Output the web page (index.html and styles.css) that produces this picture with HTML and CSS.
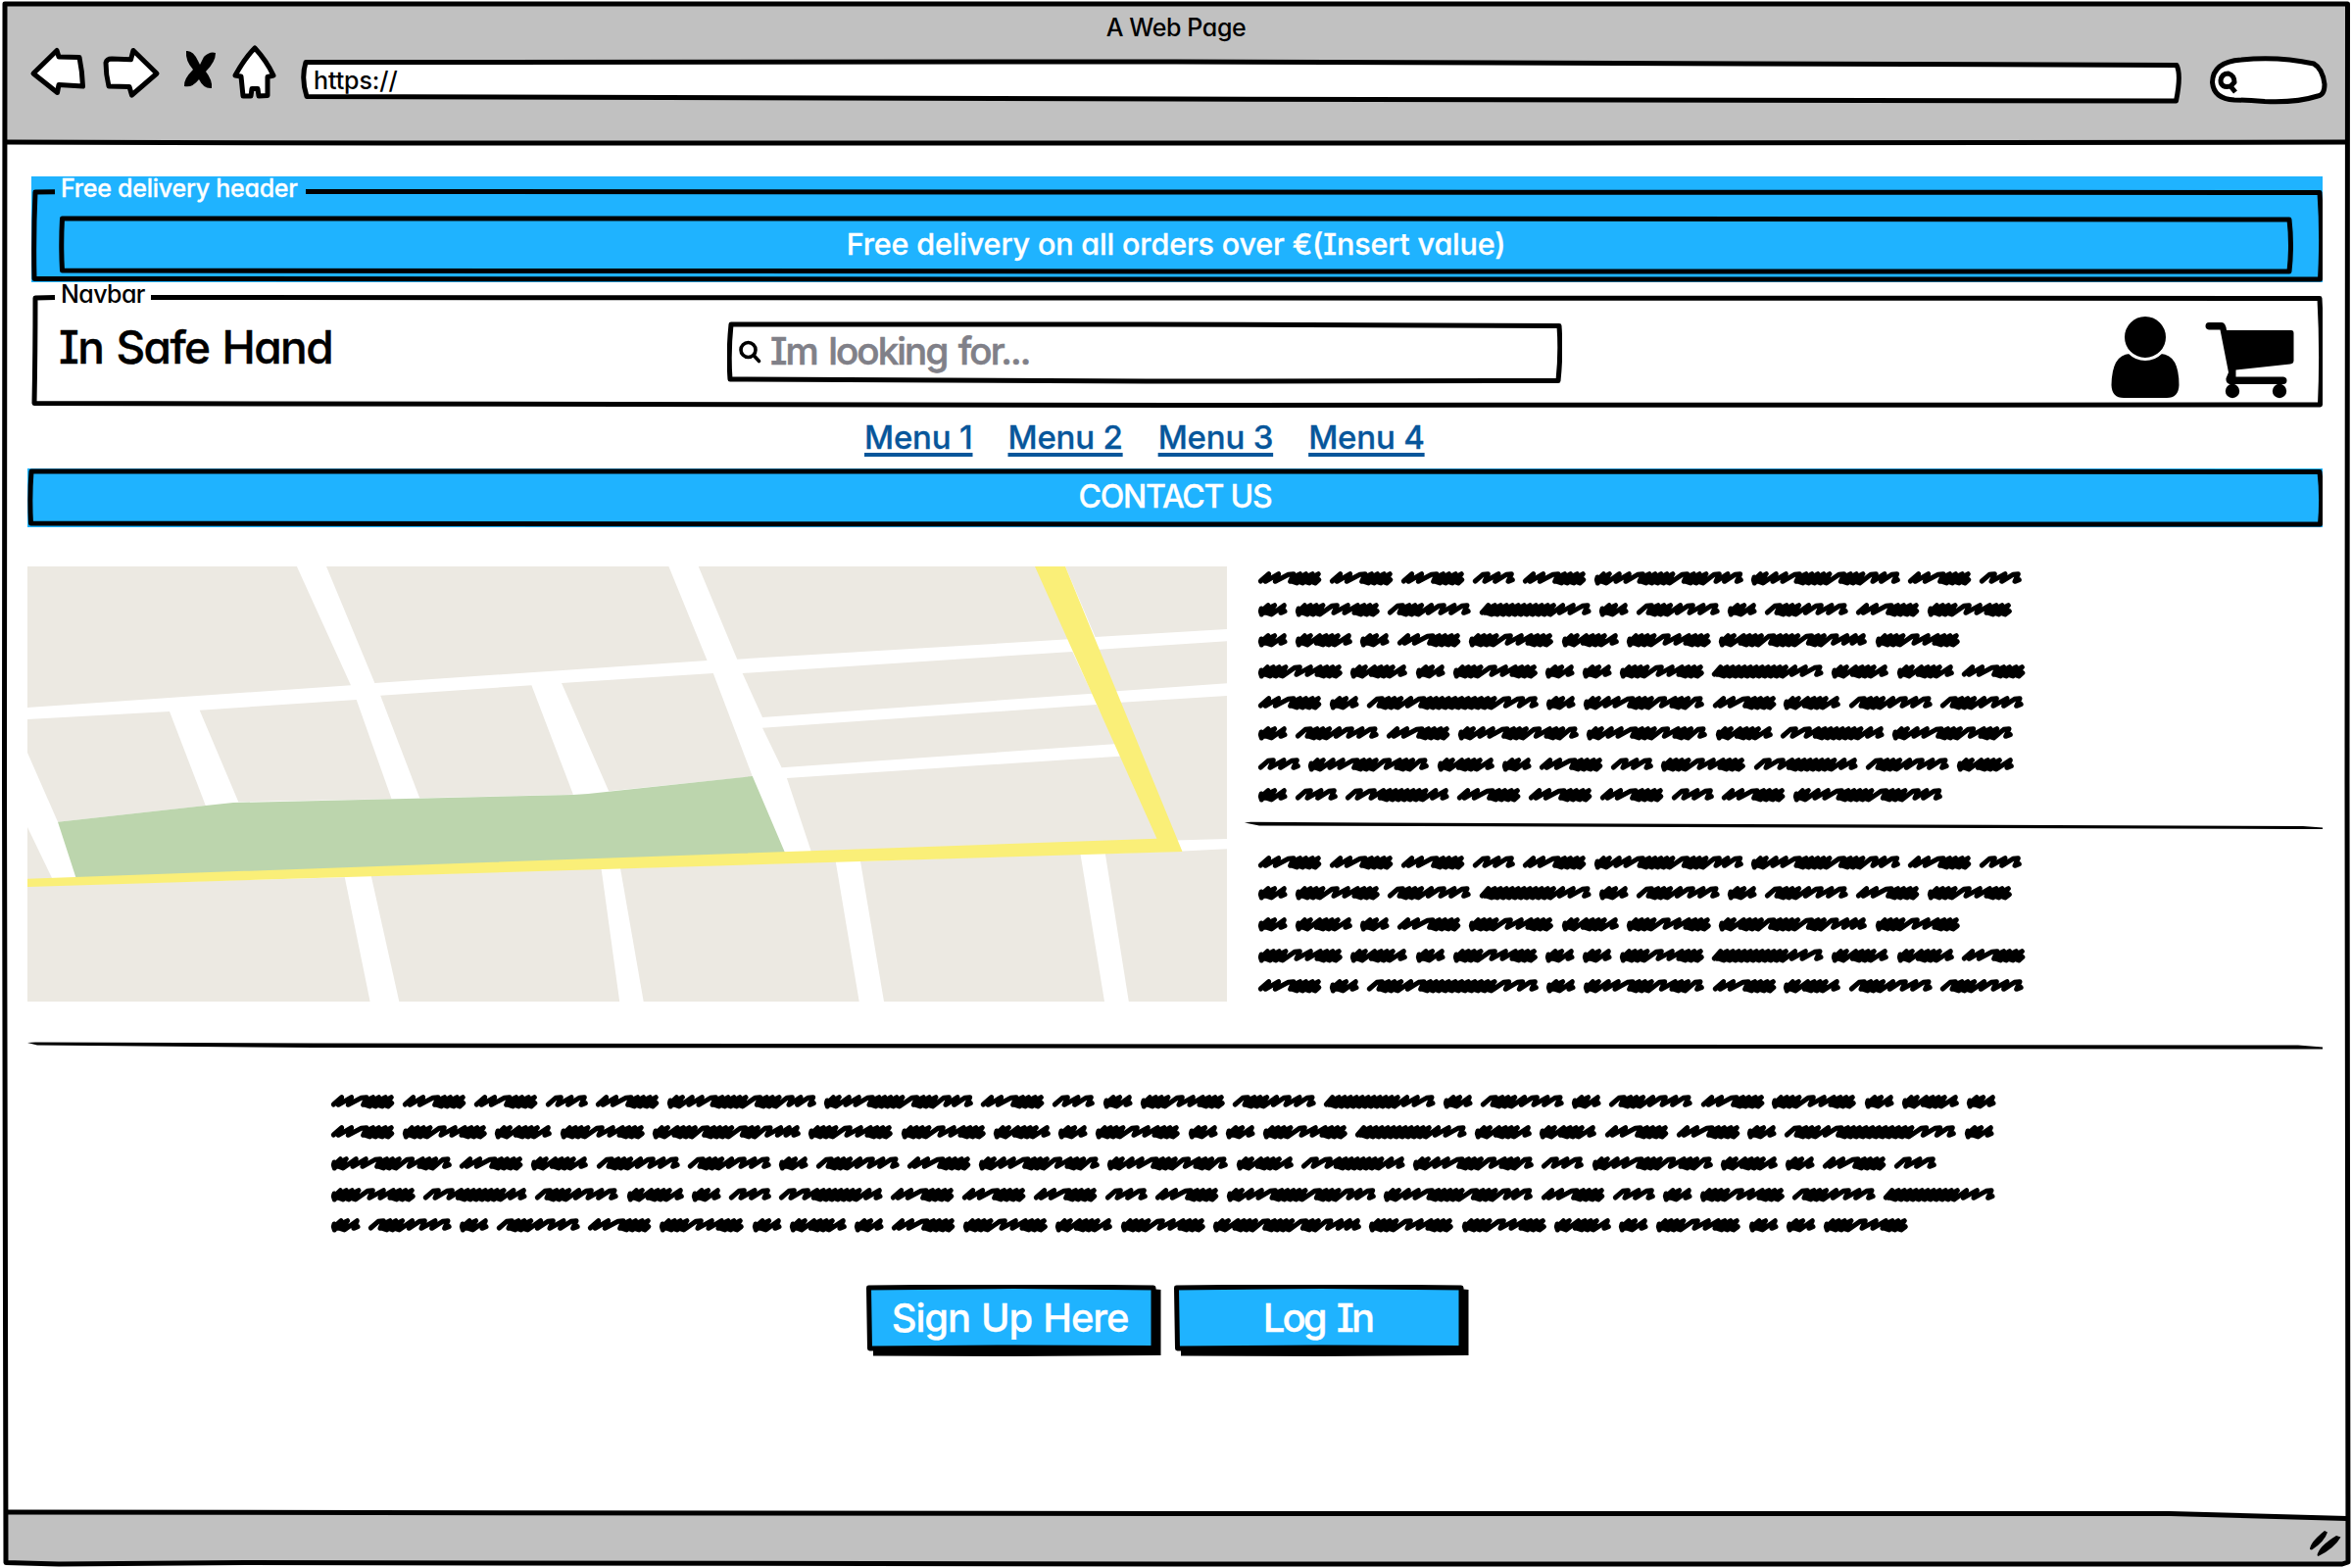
FILE: index.html
```html
<!DOCTYPE html>
<html lang="en">
<head>
<meta charset="utf-8">
<title>A Web Page</title>
<link rel="stylesheet" href="styles.css">
</head>
<body>
<div class="window">
  <header class="chrome">
    <div class="chrome-title"><span class="t-title">A Web Page</span></div>
    <div class="toolbar">
      <svg class="nav-icons" viewBox="28 42 262 64" aria-hidden="true">
        <g class="ink paper">
          <path d="M34 75L58 51.5L60 58L81 58.5Q84 73 84.500 88L60 86.500L58.500 94.500Z"/>
          <path d="M108 64Q109 60 114 60L133.500 60.800L136 51.500L160 75L134.500 97L132 88.500L111 88Q108 76 108 64Z"/>
          <path d="M260 49Q272 62 279 77L273 78.500L273 97.500L264 98L263 90.500H257L256 98L248 98L246 78L240 77Q250 59 260 49Z"/>
        </g>
        <path d="M190 52Q197 51 202 62L204 66L208 58Q214 52 220 54Q220 63 210 73Q217 82 216 90Q208 91 203 81Q196 90 188 88Q187 81 197 71Q189 62 190 52Z"/>
      </svg>
      <div class="url">
        <svg class="frame" viewBox="307 58 1920 50" aria-hidden="true"><path class="ink paper" d="M312 63.500L1200 63L2221 66.500Q2226 76 2220.500 103L1200 101L313 98.500Q307 80 312 63.500Z"/></svg>
        <span class="t-url">https://</span>
      </div>
      <svg class="pill" viewBox="2252 52 126 58" aria-hidden="true">
        <path class="ink paper" d="M2281 102Q2260 101 2258.500 84Q2259 63 2288 61Q2325 57 2362 65Q2371 70 2373 86Q2373 97 2366 98Q2344 105 2312 103.500Q2292 102 2281 102Z"/>
        <path class="ink none" d="M2277 88Q2267 90 2267 82Q2268 75 2275 75Q2281 77 2281 84L2277 88L2282 94"/>
      </svg>
    </div>
  </header>

  <main class="page">
    <section class="delivery">
      <svg class="frame" viewBox="32 180 2338 108" aria-hidden="true"><path class="ink none" d="M56 195.800L36 196Q34 240 35 284.500L1200 285L2367.500 285Q2370 240 2367 196.500L1200 196L312 195.500"/></svg>
      <span class="legend t-delivery">Free delivery header</span>
      <div class="banner">
        <svg class="frame" viewBox="60 220 2280 60" aria-hidden="true"><path class="ink none" d="M63.500 223Q62 250 63.500 276L1200 277L2336 277Q2339 250 2336 224L1200 223Z"/></svg>
        <span class="t-banner">Free delivery on all orders over €(Insert value)</span>
      </div>
    </section>

    <section class="navbar">
      <svg class="frame" viewBox="32 300 2338 117" aria-hidden="true"><path class="ink none" d="M56 303.500L36 304Q36 360 35 411.500L1200 413.500L2367.500 413Q2370 360 2367 304.500L1200 304L154 303.500"/></svg>
      <span class="legend t-navbar">Navbar</span>
      <div class="brand"><span class="t-brand">In Safe Hand</span></div>
      <div class="search">
        <svg class="frame" viewBox="742 327 852 65" aria-hidden="true"><path class="ink none" d="M746 331Q743 360 745 387L1170 389L1590 388.500Q1593 360 1591 332.500L1170 331Z"/></svg>
        <svg class="lens" viewBox="754 348 24 26" aria-hidden="true"><circle class="lens-ink" cx="763.500" cy="359" r="7.500"/><path class="lens-ink" d="M769 364.500L774.500 370.500"/></svg>
        <span class="t-search">Im looking for...</span>
      </div>
      <svg class="nav-actions" viewBox="2154 320 190 88" aria-hidden="true">
        <path d="M2174 361Q2190 372 2206 361Q2224.500 362 2224.500 393Q2224 406 2212 406H2168Q2156 406 2155.500 393Q2156 362 2174 361Z"/>
        <circle class="head" cx="2190" cy="344" r="22.500"/>
        <path d="M2255 329H2268Q2272 329 2273 337H2339Q2341.500 337 2341.500 340V368Q2341.500 371 2338 371.500L2282.500 377.500V384.500H2331Q2334.500 385 2334.500 388.300Q2334.500 392 2331 392H2276Q2272 391 2272.500 386L2275 380L2266.500 336.500H2255Q2251.500 336 2251.500 332.800Q2251.500 329 2255 329Z"/>
        <circle cx="2279" cy="399" r="7.200"/><circle cx="2327" cy="399" r="7.200"/>
      </svg>
    </section>

    <nav class="menu">
      <a class="link" href="#">Menu 1</a><a class="link" href="#">Menu 2</a><a class="link" href="#">Menu 3</a><a class="link" href="#">Menu 4</a>
    </nav>

    <div class="contact">
      <svg class="frame" viewBox="28 478 2342 60" aria-hidden="true"><path class="ink none" d="M32 481Q30 508 31.500 534L1200 535L2367.500 535Q2370 508 2367 481.500L1200 481Z"/></svg>
      <span class="t-contact">CONTACT US</span>
    </div>

    <section class="columns">
      <svg class="map" viewBox="28 578 1224 444" role="img" aria-label="Map">
        <g class="block">
          <path d="M28 578H302.900L358 699.300L28 722Z"/>
          <path d="M333 578H682.400L721.600 674L382.400 697Z"/>
          <path d="M712.700 578H1070L1095 652L752.200 672.700Z"/>
          <path d="M1087 578H1252V642L1117.600 650Z"/>
          <path d="M28 734L173 726L209.800 822L59 838.700L28 768Z"/>
          <path d="M203.700 724.700L363.700 714L399.600 815.300L243.300 818.300Z"/>
          <path d="M388.200 709.700L542.400 699.300L584.900 810.700L428.200 814.300Z"/>
          <path d="M573 697L727.800 687L767.800 792.300L621.200 807.300Z"/>
          <path d="M28 844L53.500 897H28Z"/>
          <path d="M757.600 687L1094.300 665L1114.300 707.700L778 732Z"/>
          <path d="M1118 663L1252 654.300V697.300L1136 705.500Z"/>
          <path d="M778 742.700L1118.800 719L1140 759L797.600 783.300Z"/>
          <path d="M1140 717L1252 710V856L1198 857.500L1160 770Z"/>
          <path d="M802.900 794L1146 771.400L1185 857L827.800 869Z"/>
          <path d="M28 904L351.800 895.300L377.600 1022H28Z"/>
          <path d="M378.800 894L613.500 886L632.200 1022H407.300Z"/>
          <path d="M633 886L852.700 879L876.700 1022H656.700Z"/>
          <path d="M878 879L1102.400 871L1127 1022H902Z"/>
          <path d="M1127.800 871L1206.500 868.500L1252 866.300V1022H1151.800Z"/>
        </g>
        <path class="park" d="M59 838.700L209.800 822L238 819L584.900 811L600 810L767.800 792L801.200 870.500L77.600 896Z"/>
        <path class="road" d="M28 896.700L1180.400 855.700L1056 578H1087L1206.500 869L28 905Z"/>
      </svg>
      <div class="aside">
        <p class="scribble" data-lines="AAACAIIAC BDEFBEBEAD BGBADGDJD DGBDBBDFGGA ABLBHAGEE BEAHHGKH CHGBACDKEG BCKAAACAI"></p>
        <svg class="rule" viewBox="1270 838 1100 10" aria-hidden="true"><path d="M1270 839.500L1276 838.800L1400 839.500L2350 843L2370 844.500V846L2340 846L1285 842.500Z"/></svg>
        <p class="scribble" data-lines="AAACAIIAC BDEFBEBEAD BGBADGDJD DGBDBBDFGGA ABLBHAGEE"></p>
      </div>
    </section>

    <svg class="rule wide" viewBox="28 1062 2342 10" aria-hidden="true"><path d="M28 1064L36 1063.500L320 1064.500L2345 1066.500L2370 1068.500V1070.500H2330L320 1069L38 1066.500Z"/></svg>

    <p class="scribble intro" data-lines="AAACAIIACBDEFBEBEADBGB ADGDJDDGBDBBDFGGAABLB HAGEEBEAHHGKHCHGBAC DKEGBCKAAACAIIACBDEF BEBEADBGBADGDJDDGBDBBD"></p>

    <div class="buttons">
      <button class="btn"><svg class="frame" viewBox="0 0 301 73" aria-hidden="true"><path d="M7 5L295 4.500L300.500 5V72L150 73L7 72.500Z"/><path class="ink face" d="M2.500 3L150 1.500L293 3V64.500L150 64L3.500 65Z"/></svg><span class="t-signup">Sign Up Here</span></button>
      <button class="btn"><svg class="frame" viewBox="0 0 301 73" aria-hidden="true"><path d="M7 5L295 4.500L300.500 5V72L150 73L7 72.500Z"/><path class="ink face" d="M2.500 3L150 1.500L293 3V64.500L150 64L3.500 65Z"/></svg><span class="t-login">Log In</span></button>
    </div>
  </main>

  <footer class="status">
    <svg class="grip" viewBox="2354 1558 38 32" aria-hidden="true"><path d="M2357 1581Q2357 1574 2372 1562L2375 1563.500Q2372 1573 2359 1581.500ZM2364.500 1587Q2366 1578 2384 1567L2388.500 1568.500Q2382 1580 2365.500 1588Z"/></svg>
  </footer>
  <svg class="window-frame" viewBox="0 0 2400 1600" aria-hidden="true">
    <path class="paper" d="M2214 1540H2395V1549.500L2214 1544.500Z"/>
    <path class="ink none" d="M5 4H2395.500L2395 800L2396 1594L2390 1596L1200 1596L250 1594.500L60 1596L6 1594.500L4.500 800Z"/>
    <path class="ink none" d="M5 145L400 146H1600L2395 145"/>
    <path class="ink none" d="M5 1543L1200 1544.500H2214L2395 1549.500"/>
  </svg>
</div>
<script src="scribble.js"></script>
</body>
</html>
```
FILE: styles.css
```css
* { box-sizing: border-box; }
body {
  margin: 0;
  background: #fff;
  color: #000;
  font-family: Inter, "Open Sans", sans-serif;
  font-feature-settings: "cv11", "cv08";
  font-weight: 500;
  -webkit-text-stroke: 0.3px currentColor;
}
svg { display: block; }
span, a { white-space: nowrap; }
.window { position: relative; width: 2400px; height: 1600px; display: flex; flex-direction: column; overflow: hidden; padding: 2px 4px; }
.window-frame { position: absolute; inset: 0; width: 2400px; height: 1600px; }
.frame { position: absolute; inset: 0; width: 100%; height: 100%; }
.ink { stroke: #000; stroke-width: 5; stroke-linejoin: round; stroke-linecap: butt; }
.paper { fill: #fff; }
.none { fill: none; }
.face { fill: #1fb3ff; }

.chrome { height: 144px; background: #c1c1c1; flex: none; }
.chrome-title { height: 40px; padding-top: 11px; display: flex; justify-content: center; line-height: 30px; }
.toolbar { display: flex; padding-left: 24px; height: 68px; align-items: flex-start; }
.nav-icons { width: 262px; height: 64px; }
.url { position: relative; width: 1920px; height: 50px; margin: 16px 0 0 17px; padding: 0 13px 3px; display: flex; align-items: center; }
.url span { position: relative; }
.pill { width: 126px; height: 58px; margin: 10px 0 0 24px; }

.page { height: 1396px; flex: none; padding: 34px 26px 0 24px; background: #fff; }
.delivery { position: relative; height: 108px; margin-left: 4px; background: #1fb3ff; color: #fff; padding: 40px 30px 0 28px; }
.legend { position: absolute; left: 30px; line-height: 30px; }
.t-delivery { top: -3px; }
.banner { position: relative; height: 60px; display: flex; align-items: center; justify-content: center; padding-bottom: 4px; }
.banner span, .contact span, .btn span { position: relative; }
.navbar { position: relative; height: 117px; margin: 12px 0 0 4px; display: flex; align-items: flex-start; padding-left: 28px; }
.t-navbar { top: -15px; }
.brand { width: 682px; padding-top: 24px; line-height: 60px; }
.search { position: relative; width: 852px; height: 65px; margin-top: 27px; display: flex; align-items: center; padding: 0 0 3px 12px; }
.lens { width: 24px; height: 26px; margin: 2px 8px 0 0; }
.lens-ink { fill: none; stroke: #000; stroke-width: 3.6; stroke-linecap: round; }
.nav-actions { width: 190px; height: 88px; margin: 20px 0 0 559px; }
.head { stroke: #fff; stroke-width: 3; }
.menu { height: 61px; padding: 9px 0 0 854px; display: flex; gap: 36px; line-height: 40px; }
.link { color: #07569b; font-size: 33px; letter-spacing: -0.2px; text-decoration-thickness: 3.5px; text-underline-offset: 4px; }
.contact { position: relative; height: 60px; background: #1fb3ff; color: #fff; display: flex; align-items: center; justify-content: center; padding-bottom: 4px; }

.columns { display: flex; height: 444px; margin-top: 40px; gap: 18px; }
.map { width: 1224px; height: 444px; }
.block { fill: #ece9e2; }
.park { fill: #bcd5ad; }
.road { fill: #faef78; }
.aside { width: 1100px; padding-top: 0; }
.scribble { margin: -3px 0 0 14px; display: flex; flex-direction: column; }
.line { display: flex; gap: 8.700px; height: 31.600px; align-items: center; }
.word { height: 15px; overflow: visible; fill: none; stroke: #000; stroke-width: 15; stroke-linejoin: round; stroke-linecap: round; }
.rule { width: 1100px; height: 10px; margin: 9.800px 0 20px; }
.wide { width: 2342px; margin: 40px 0; }
.intro { margin: -3.500px 0 0 310px; }
.buttons { display: flex; gap: 13px; margin: 45px 0 0 856px; }
.btn { position: relative; width: 301px; height: 73px; border: 0; background: none; padding: 0 8px 6px 0; font: inherit; font-feature-settings: inherit; color: #fff; display: flex; align-items: center; justify-content: center; }

.status { height: 54px; background: #c1c1c1; flex: none; display: flex; justify-content: flex-end; padding: 16px 4px 0 0; }
.grip { width: 38px; height: 32px; }

.t-title { font-size: 25px; letter-spacing: -0.4px; -webkit-text-stroke-width: 0; }
.t-url { font-size: 25px; letter-spacing: -0.100px; -webkit-text-stroke-width: 0; }
.t-delivery { font-size: 25px; letter-spacing: -0.250px; }
.t-navbar { font-size: 25px; letter-spacing: -0.6px; -webkit-text-stroke-width: 0; }
.t-banner { font-size: 30.500px; letter-spacing: -0.150px; }
.t-brand { font-size: 46px; letter-spacing: -1.6px; word-spacing: 2.5px; -webkit-text-stroke-width: 0.4px; }
.t-search { font-size: 38.500px; letter-spacing: -1.900px; word-spacing: 3px; color: #808088; -webkit-text-stroke-width: 0.6px; }
.t-contact { font-size: 32px; letter-spacing: -1.2px; }
.t-signup { font-size: 40px; letter-spacing: -1.1px; word-spacing: 1.5px; }
.t-login { font-size: 40px; letter-spacing: -2.8px; word-spacing: 4px; }
```
FILE: scribble.js
```js
// Each word: total width, then the x of every upstroke tip (thirds of a pixel).
// "o" words open with a rounded heavy loop, the others with a thin rising stroke.
const WORDS = {
  A: [192.5, '', [32, 62, 108, 128, 146, 166, 184]],
  B: [88, 'o', [30, 50, 79]],
  C: [128, '', [46, 78, 118]],
  D: [257, 'o', [28, 46, 64, 84, 127, 160, 190, 210, 228, 247]],
  E: [253.5, '', [46, 66, 84, 104, 134, 172, 204, 243]],
  F: [340, '', [26, 46, 64, 82, 100, 118, 136, 154, 172, 190, 208, 226, 254, 286, 330]],
  G: [173, 'o', [28, 46, 74, 94, 112, 130, 163]],
  H: [368, 'o', [28, 46, 76, 106, 150, 170, 188, 208, 248, 280, 300, 320, 357]],
  I: [455, 'o', [28, 46, 76, 106, 148, 168, 186, 204, 222, 240, 284, 304, 322, 342, 382, 408, 446]],
  J: [452, 'o', [28, 46, 76, 94, 112, 130, 168, 188, 206, 224, 242, 284, 304, 322, 360, 392, 418, 442]],
  K: [316, '', [46, 88, 116, 136, 154, 172, 190, 208, 226, 246, 276, 307]],
  L: [524, '', [46, 66, 84, 104, 134, 174, 194, 212, 230, 250, 270, 290, 310, 330, 350, 370, 390, 434, 476, 514]],
};

function wordPath([width, kind, tips]) {
  let d = kind === 'o' ? 'M9 18L7 26L10 36L14 22' : 'M7 30';
  tips.forEach((x, i) => {
    const gap = i ? x - tips[i - 1] : x;
    const dense = i > 0 && gap < 22;
    if (gap > 36) d += `L${x - 16} 10`;
    d += `L${x} 8`;
    // Closely packed strokes run together into a solid band.
    if (dense) d += `L${x - gap - 2} 19L${x - 4} 19L${x - gap - 8} 30`;
    d += `L${x - 10} ${dense ? 36 : 31}`;
  });
  return d + `L${width - 7} 26`;
}

document.querySelectorAll('.scribble').forEach((p) => {
  p.dataset.lines.split(' ').forEach((codes) => {
    const words = [...codes].map((c) => {
      const w = WORDS[c];
      return `<svg class="word" width="${w[0] / 3}" viewBox="0 0 ${w[0]} 45"><path d="${wordPath(w)}"/></svg>`;
    });
    p.insertAdjacentHTML('beforeend', `<span class="line">${words.join('')}</span>`);
  });
});
```
